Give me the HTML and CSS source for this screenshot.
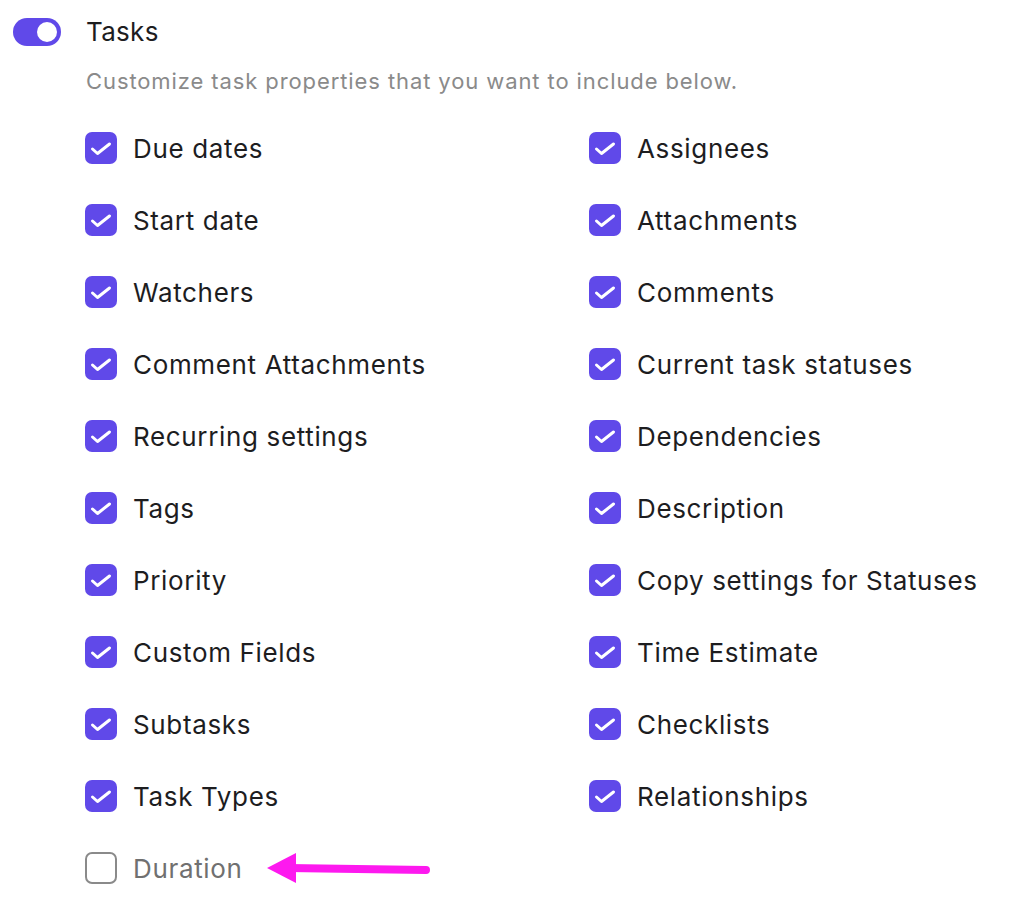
FILE: index.html
```html
<!DOCTYPE html>
<html lang="en">
<head>
    <meta charset="UTF-8">
    <title>Tasks</title>
    <link rel="stylesheet" href="styles.css">
</head>
<body>
    <section class="panel">
        <div class="head">
            <span class="toggle on"><i></i></span>
            <span class="title">Tasks</span>
        </div>
        <p class="desc">Customize task properties that you want to include below.</p>
        <ul class="props">
            <li><span class="box"></span>Due dates</li>
            <li><span class="box"></span>Assignees</li>
            <li><span class="box"></span>Start date</li>
            <li><span class="box"></span>Attachments</li>
            <li><span class="box"></span>Watchers</li>
            <li><span class="box"></span>Comments</li>
            <li><span class="box"></span>Comment Attachments</li>
            <li><span class="box"></span>Current task statuses</li>
            <li><span class="box"></span>Recurring settings</li>
            <li><span class="box"></span>Dependencies</li>
            <li><span class="box"></span>Tags</li>
            <li><span class="box"></span>Description</li>
            <li><span class="box"></span>Priority</li>
            <li><span class="box"></span>Copy settings for Statuses</li>
            <li><span class="box"></span>Custom Fields</li>
            <li><span class="box"></span>Time Estimate</li>
            <li><span class="box"></span>Subtasks</li>
            <li><span class="box"></span>Checklists</li>
            <li><span class="box"></span>Task Types</li>
            <li><span class="box"></span>Relationships</li>
            <li class="off"><span class="box"></span>Duration</li>
        </ul>
        <svg class="arrow" width="180" height="44" viewBox="0 0 180 44">
            <line x1="26" y1="20" x2="164" y2="22" stroke="#fd19ef" stroke-width="8" stroke-linecap="round"/>
            <polygon points="5,20 34,5 34,35" fill="#fd19ef"/>
        </svg>
    </section>
</body>
</html>
```

FILE: styles.css
```css
body{
    margin:0;
    background:#fff;
    font-family:Inter, "Noto Sans", sans-serif;
    color:#1d1d1f;
}
.panel{
    position:relative;
    padding:18px 0 0 13px;
}
.head{
    display:flex;
    align-items:center;
    gap:25px;
    height:28px;
}
.toggle{
    width:48px;
    height:28px;
    border-radius:14px;
    background:#6049e9;
    display:flex;
    align-items:center;
    justify-content:flex-end;
    padding:0 4px;
    box-sizing:border-box;
}
.toggle i{
    width:20px;
    height:20px;
    border-radius:50%;
    background:#fff;
}
.title{
    font-size:26px;
    line-height:28px;
    letter-spacing:0.3px;
}
.desc{
    margin:20px 0 0 73px;
    font-size:22px;
    line-height:30px;
    letter-spacing:0.9px;
    color:#8a8a8a;
}
.props{
    list-style:none;
    margin:16px 0 0 72px;
    padding:0;
    display:grid;
    grid-template-columns:504px 1fr;
    grid-auto-rows:72px;
}
.props li{
    display:flex;
    align-items:center;
    gap:16px;
    font-size:26px;
    letter-spacing:0.65px;
}
.box{
    width:32px;
    height:32px;
    border-radius:7px;
    background:#6049e9 url("data:image/svg+xml,%3Csvg xmlns='http://www.w3.org/2000/svg' width='32' height='32'%3E%3Cpath d='M7.5 17 12.5 21.5 24.5 12' fill='none' stroke='%23fff' stroke-width='3' stroke-linecap='round' stroke-linejoin='round'/%3E%3C/svg%3E") no-repeat center;
    flex:none;
}
.props li.off{
    color:#707070;
}
.props li.off .box{
    background:#fff;
    border:2px solid #8a8a8a;
    box-sizing:border-box;
}
.arrow{
    position:absolute;
    left:262px;
    top:848px;
}
```
